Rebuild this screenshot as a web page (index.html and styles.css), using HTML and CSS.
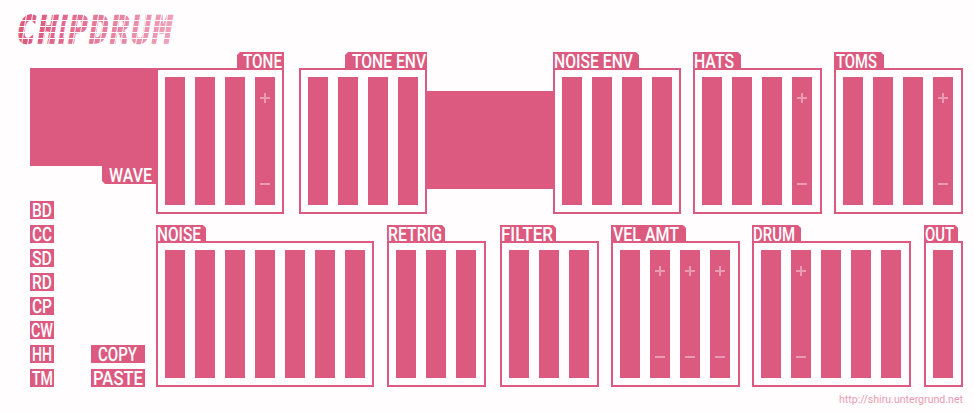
FILE: index.html
```html
<!DOCTYPE html>
<html lang="en">
<head>
<meta charset="utf-8">
<title>ChipDrum</title>
<link rel="stylesheet" href="styles.css">
</head>
<body>
<header class="header">
  <svg class="logo" width="190" height="44" viewBox="10 5 190 44">
    <defs>
      <linearGradient id="fade" gradientUnits="userSpaceOnUse" x1="0" y1="0" x2="200" y2="0">
        <stop offset="0.08" stop-color="#dc5a80"/>
        <stop offset="1" stop-color="#efa6be"/>
      </linearGradient>
    </defs>
    <g transform="translate(21 15) skewX(-9.46)">
      <text class="wordmark" transform="scale(.82 1)" y="28" x="-1.7 23.9 41 61.3 86.9 112.5 138.1 163.8">CHIPDRUM</text>
      <path class="grid" d="M-8 5.5H165M-8 11.5H165M-8 17.5H165M-8 23.5H165M5.5 -1V31M11.5 -1V31M26.5 -1V31M32.5 -1V31M56.5 -1V31M62.5 -1V31M77.5 -1V31M83.5 -1V31M98.5 -1V31M104.5 -1V31M119.5 -1V31M125.5 -1V31M140.5 -1V31M146.5 -1V31"/>
      <path class="gaps" d="M19 -1V31M40 -1V31M49 -1V31M70 -1V31M91 -1V31M112 -1V31M133 -1V31"/>
    </g>
  </svg>
</header>
<main class="synth">
  <aside class="side">
    <div class="screen"></div>
    <div class="tab tab-below"><svg class="label" width="42" height="14"><text x="-1" y="14" textLength="43" lengthAdjust="spacingAndGlyphs">WAVE</text></svg></div>
    <div class="controls">
      <div class="pads">
        <button class="btn"><svg class="label" width="18" height="14"><text x="-1" y="14" textLength="20" lengthAdjust="spacingAndGlyphs">BD</text></svg></button>
        <button class="btn"><svg class="label" width="18" height="14"><text x="-1" y="14" textLength="20" lengthAdjust="spacingAndGlyphs">CC</text></svg></button>
        <button class="btn"><svg class="label" width="18" height="14"><text x="-1" y="14" textLength="20" lengthAdjust="spacingAndGlyphs">SD</text></svg></button>
        <button class="btn"><svg class="label" width="18" height="14"><text x="-1" y="14" textLength="20" lengthAdjust="spacingAndGlyphs">RD</text></svg></button>
        <button class="btn"><svg class="label" width="18" height="14"><text x="-1" y="14" textLength="20" lengthAdjust="spacingAndGlyphs">CP</text></svg></button>
        <button class="btn"><svg class="label" width="20" height="14"><text x="-1" y="14" textLength="22" lengthAdjust="spacingAndGlyphs">CW</text></svg></button>
        <button class="btn"><svg class="label" width="18" height="14"><text x="-1" y="14" textLength="20" lengthAdjust="spacingAndGlyphs">HH</text></svg></button>
        <button class="btn"><svg class="label" width="20" height="14"><text x="0" y="14" textLength="21" lengthAdjust="spacingAndGlyphs">TM</text></svg></button>
      </div>
      <div class="actions">
        <button class="btn"><svg class="label" width="38" height="14"><text x="-1" y="14" textLength="39" lengthAdjust="spacingAndGlyphs">COPY</text></svg></button>
        <button class="btn"><svg class="label" width="48" height="14"><text x="-1" y="14" textLength="50" lengthAdjust="spacingAndGlyphs">PASTE</text></svg></button>
      </div>
    </div>
  </aside>
  <div class="rack">
    <div class="row">
      <section class="panel tone">
        <div class="tab tab-right"><svg class="label" width="38" height="14"><text x="-1" y="14" textLength="39" lengthAdjust="spacingAndGlyphs">TONE</text></svg></div>
        <div class="frame"><i class="bar"></i><i class="bar"></i><i class="bar"></i><i class="bar bipolar"></i></div>
      </section>
      <section class="panel tone-env">
        <div class="tab tab-right"><svg class="label" width="73" height="14"><text x="0" y="14" textLength="74" lengthAdjust="spacingAndGlyphs">TONE ENV</text></svg></div>
        <div class="frame"><i class="bar"></i><i class="bar"></i><i class="bar"></i><i class="bar"></i></div>
      </section>
      <div class="screen screen-mid"></div>
      <section class="panel noise-env">
        <div class="tab"><svg class="label" width="77" height="14"><text x="-1" y="14" textLength="79" lengthAdjust="spacingAndGlyphs">NOISE ENV</text></svg></div>
        <div class="frame"><i class="bar"></i><i class="bar"></i><i class="bar"></i><i class="bar"></i></div>
      </section>
      <section class="panel hats">
        <div class="tab"><svg class="label" width="38" height="14"><text x="-1" y="14" textLength="40" lengthAdjust="spacingAndGlyphs">HATS</text></svg></div>
        <div class="frame"><i class="bar"></i><i class="bar"></i><i class="bar"></i><i class="bar bipolar"></i></div>
      </section>
      <section class="panel toms">
        <div class="tab"><svg class="label" width="40" height="14"><text x="0" y="14" textLength="41" lengthAdjust="spacingAndGlyphs">TOMS</text></svg></div>
        <div class="frame"><i class="bar"></i><i class="bar"></i><i class="bar"></i><i class="bar bipolar"></i></div>
      </section>
    </div>
    <div class="row">
      <section class="panel noise">
        <div class="tab"><svg class="label" width="42" height="14"><text x="-1" y="14" textLength="44" lengthAdjust="spacingAndGlyphs">NOISE</text></svg></div>
        <div class="frame"><i class="bar"></i><i class="bar"></i><i class="bar"></i><i class="bar"></i><i class="bar"></i><i class="bar"></i><i class="bar"></i></div>
      </section>
      <section class="panel retrig">
        <div class="tab"><svg class="label" width="52" height="14"><text x="-1" y="14" textLength="54" lengthAdjust="spacingAndGlyphs">RETRIG</text></svg></div>
        <div class="frame"><i class="bar"></i><i class="bar"></i><i class="bar"></i></div>
      </section>
      <section class="panel filter">
        <div class="tab"><svg class="label" width="51" height="14"><text x="-1" y="14" textLength="52" lengthAdjust="spacingAndGlyphs">FILTER</text></svg></div>
        <div class="frame"><i class="bar"></i><i class="bar"></i><i class="bar"></i></div>
      </section>
      <section class="panel vel">
        <div class="tab"><svg class="label" width="66" height="14"><text x="0" y="14" textLength="66" lengthAdjust="spacingAndGlyphs">VEL AMT</text></svg></div>
        <div class="frame"><i class="bar"></i><i class="bar bipolar"></i><i class="bar bipolar"></i><i class="bar bipolar"></i></div>
      </section>
      <section class="panel drum">
        <div class="tab"><svg class="label" width="40" height="14"><text x="-1" y="14" textLength="42" lengthAdjust="spacingAndGlyphs">DRUM</text></svg></div>
        <div class="frame"><i class="bar"></i><i class="bar bipolar"></i><i class="bar"></i><i class="bar"></i><i class="bar"></i></div>
      </section>
      <section class="panel out">
        <div class="tab"><svg class="label" width="28" height="14"><text x="-1" y="14" textLength="29" lengthAdjust="spacingAndGlyphs">OUT</text></svg></div>
        <div class="frame"><i class="bar"></i></div>
      </section>
    </div>
  </div>
</main>
<footer class="footer">
  <svg class="url" width="124" height="14"><text x="0" y="11" textLength="124" lengthAdjust="spacingAndGlyphs">http://shiru.untergrund.net</text></svg>
</footer>
</body>
</html>
```
FILE: styles.css
```css
:root {
  --pink: #dc5a7f;
  --soft: #e99bb3;
  --paper: #fffdfe;
}

* { box-sizing: border-box; }

body {
  margin: 0;
  width: 974px;
  height: 412px;
  overflow: hidden;
  background: var(--paper);
}

svg { display: block; overflow: visible; }

.header { height: 52px; padding: 5px 0 0 10px; }
.wordmark {
  font: bold 37.6px "DejaVu Sans Mono", monospace;
  fill: url(#fade);
  stroke: url(#fade);
  stroke-width: 1.6;
  stroke-linejoin: miter;
}
.grid { stroke: var(--paper); stroke-width: 1; fill: none; }
.gaps { stroke: var(--paper); stroke-width: 4; fill: none; }

.synth { display: flex; padding-left: 30px; height: 335px; }

.side { width: 126px; padding-top: 16px; }
.screen { width: 126px; height: 98px; background: var(--pink); }
.controls { display: flex; gap: 37px; margin-top: 17px; }
.pads, .actions { display: flex; flex-direction: column; gap: 6px; }
.pads { width: 24px; }
.actions { width: 54px; justify-content: flex-end; }

.btn {
  display: flex;
  justify-content: center;
  align-items: center;
  height: 18px;
  margin: 0;
  padding: 0;
  border: 0;
  background: var(--pink);
}

.label { flex: none; }
.label text {
  font: 500 19.7px Roboto, "Liberation Sans", sans-serif;
  fill: #fff;
  text-rendering: geometricPrecision;
}

.rack { display: flex; flex-direction: column; gap: 11px; }
.row { display: flex; height: 162px; }
.screen-mid { margin-top: 39px; }

.tab {
  height: 16px;
  padding: 2px 0 0 2px;
  background: var(--pink);
  clip-path: polygon(0 0, calc(100% - 3px) 0, 100% 3px, 100% 100%, 0 100%);
}
.tab-right {
  margin-left: auto;
  padding-left: 7px;
  clip-path: polygon(3px 0, 100% 0, 100% 100%, 0 100%, 0 3px);
}
.tab-below {
  width: 54px;
  height: 18px;
  margin-left: 72px;
  padding-left: 8px;
  clip-path: polygon(0 0, 100% 0, 100% 100%, 3px 100%, 0 calc(100% - 3px));
}

.frame {
  display: flex;
  gap: 10px;
  height: 146px;
  padding: 7px;
  border: 2px solid var(--pink);
}

.bar { flex: none; width: 20px; height: 128px; background: var(--pink); }
.bipolar {
  background:
    linear-gradient(var(--soft), var(--soft)) 9px 16px / 2px 10px no-repeat,
    linear-gradient(var(--soft), var(--soft)) 5px 20px / 10px 2px no-repeat,
    linear-gradient(var(--soft), var(--soft)) 5px 106px / 10px 2px no-repeat,
    var(--pink);
}

.tone { width: 128px; }
.tone .tab { width: 47px; }
.tone-env { width: 128px; margin-left: 15px; }
.tone-env .tab { width: 82px; }
.noise-env { width: 128px; }
.noise-env .tab { width: 86px; }
.hats { width: 129px; margin-left: 12px; }
.hats .tab { width: 48px; }
.toms { width: 129px; margin-left: 12px; }
.toms .tab { width: 50px; }

.noise { width: 218px; }
.noise .tab { width: 50px; }
.retrig { width: 99px; margin-left: 13px; }
.retrig .tab { width: 58px; }
.filter { width: 99px; margin-left: 14px; }
.filter .tab { width: 56px; }
.vel { width: 129px; margin-left: 12px; }
.vel .tab { width: 75px; }
.drum { width: 159px; margin-left: 12px; }
.drum .tab { width: 49px; }
.out { width: 39px; margin-left: 13px; }
.out .tab { width: 34px; }

.footer { display: flex; justify-content: flex-end; padding: 5px 11px 0 0; }
.url text { font: 11px Roboto, sans-serif; fill: var(--soft); }
```
